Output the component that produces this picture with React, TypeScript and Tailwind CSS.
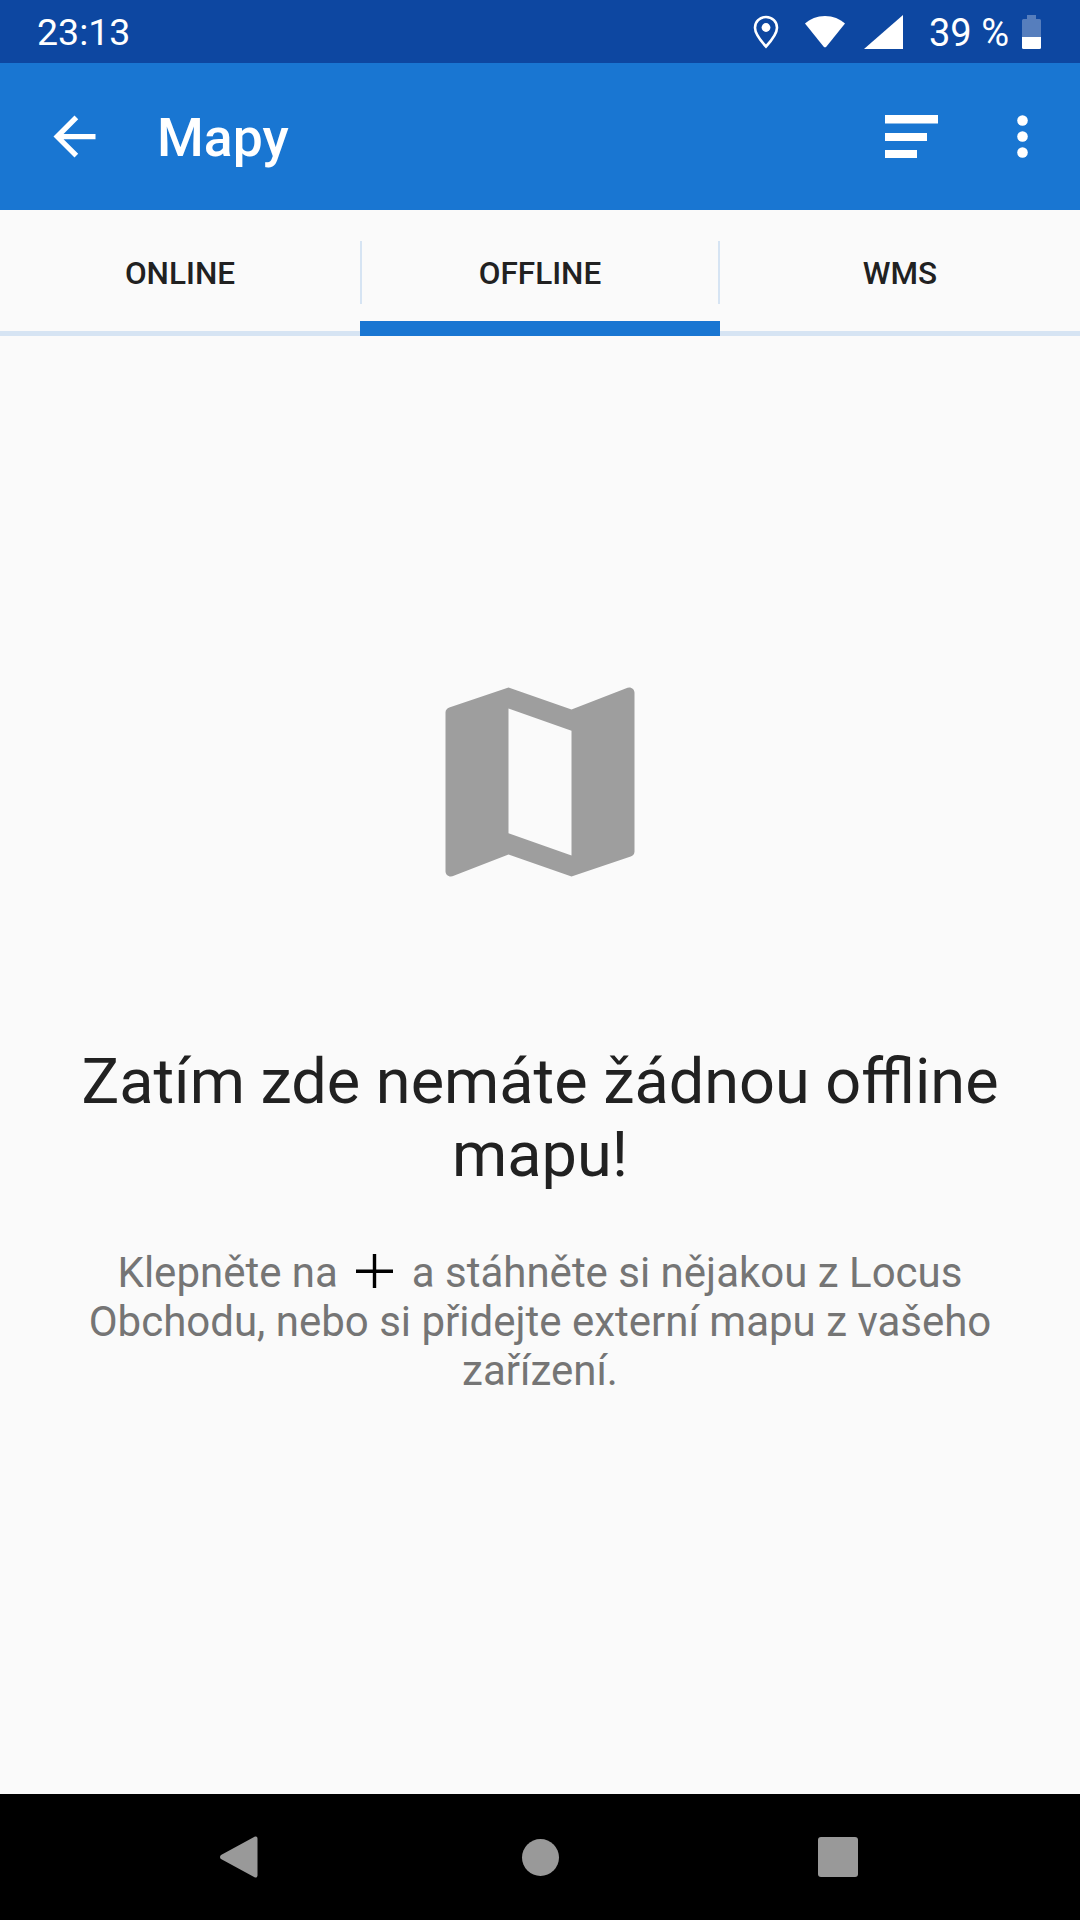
function StatusBar() {
  return (
    <div className="flex h-[63px] items-center justify-between bg-[#0d47a1] pl-[37px] pr-[39px] text-white">
      <span className="pt-[2px] text-[37.5px] leading-none">23:13</span>
      <div className="flex items-center">
        <svg width="26" height="34" viewBox="0 0 26 34" fill="none" className="mr-[26px]">
          <path d="M13 2C6.6 2 2 6.9 2 12.7c0 6.3 5.7 13 11 18.8 5.3-5.8 11-12.5 11-18.8C24 6.9 19.4 2 13 2z" stroke="white" strokeWidth="2.6" />
          <circle cx="13" cy="12.5" r="4.4" fill="white" />
        </svg>
        <svg width="40" height="32" viewBox="0 0 40 32" className="mr-[19px]">
          <path d="M0 7.5C5 3 12 0 20 0s15 3 20 7.5L21.5 30.5a2 2 0 0 1-3 0z" fill="white" />
        </svg>
        <svg width="39" height="34" viewBox="0 0 39 34" className="mr-[26px]">
          <path d="M39 0v34H0z" fill="white" />
        </svg>
        <span className="mr-[13px] pt-[2px] text-[38px] leading-none">39 %</span>
        <svg width="19" height="34" viewBox="0 0 19 34">
          <path d="M5 0h9v4h3.5a1.5 1.5 0 0 1 1.5 1.5V22H0V5.5A1.5 1.5 0 0 1 1.5 4H5z" fill="white" opacity="0.3" />
          <path d="M0 22h19v10.5a1.5 1.5 0 0 1-1.5 1.5h-16A1.5 1.5 0 0 1 0 32.5z" fill="white" />
        </svg>
      </div>
    </div>
  )
}

function AppBar() {
  return (
    <div className="flex h-[147px] items-center bg-[#1976d2] pl-[43px] pr-[52px] text-white">
      <svg width="63" height="63" viewBox="0 0 24 24" fill="white">
        <path d="M20 11H7.83l5.59-5.59L12 4l-8 8 8 8 1.41-1.41L7.83 13H20v-2z" />
      </svg>
      <span className="ml-[51px] flex-1 pt-[2px] text-[53.5px] font-medium leading-none">Mapy</span>
      <svg width="53" height="43" viewBox="0 0 53 43" fill="white" className="mr-[79px]">
        <rect x="0" y="0" width="53" height="8.5" />
        <rect x="0" y="18" width="42" height="8" />
        <rect x="0" y="35" width="32" height="8" />
      </svg>
      <svg width="11" height="43" viewBox="0 0 11 43" fill="white">
        <circle cx="5.5" cy="5.5" r="5.3" />
        <circle cx="5.5" cy="21.5" r="5.3" />
        <circle cx="5.5" cy="37.5" r="5.3" />
      </svg>
    </div>
  )
}

function Tabs() {
  return (
    <div className="flex">
      <div className="h-[126px] w-[360px] border-b-[5px] border-[#d6e4f3]">
        <div className="mt-[31px] flex h-[63px] items-center justify-center pt-[2px] text-[31.5px] font-medium text-[#212121]">ONLINE</div>
      </div>
      <div className="h-[126px] w-[360px] border-b-[15px] border-[#1976d2]">
        <div className="mt-[31px] flex h-[63px] items-center justify-center border-x-2 border-[#d6e4f3] pt-[2px] text-[31.5px] font-medium text-[#212121]">OFFLINE</div>
      </div>
      <div className="h-[126px] w-[360px] border-b-[5px] border-[#d6e4f3]">
        <div className="mt-[31px] flex h-[63px] items-center justify-center pt-[2px] text-[31.5px] font-medium text-[#212121]">WMS</div>
      </div>
    </div>
  )
}

function NavBar() {
  return (
    <div className="relative h-[126px] bg-black">
      <div className="flex h-full items-center pl-[220px]">
        <svg width="38" height="42" viewBox="0 0 38 42" fill="#999999">
          <path d="M35 .5a2 2 0 0 1 2.5 2v37a2 2 0 0 1-2.5 2L1 23a2.5 2.5 0 0 1 0-4z" />
        </svg>
        <div className="ml-[264px] h-[37px] w-[37px] rounded-full bg-[#999999]" />
        <div className="ml-[259px] h-[40px] w-[40px] rounded-[3px] bg-[#999999]" />
      </div>
    </div>
  )
}

export default function App() {
  return (
    <div className="flex h-[1920px] w-[1080px] flex-col overflow-hidden bg-[#fafafa] font-[Roboto,sans-serif]">
      <StatusBar />
      <AppBar />
      <Tabs />
      <main className="flex flex-1 flex-col items-center px-[60px] pt-[320px] text-center">
        <svg width="252" height="252" viewBox="0 0 24 24" fill="#9e9e9e">
          <path d="M20.5 3l-.16.03L15 5.1 9 3 3.36 4.9c-.21.07-.36.25-.36.48V20.5c0 .28.22.5.5.5l.16-.03L9 18.9l6 2.1 5.64-1.9c.21-.07.36-.25.36-.48V3.5c0-.28-.22-.5-.5-.5zM15 19l-6-2.11V5l6 2.11V19z" />
        </svg>
        <h1 className="mt-[137px] text-[63px] font-normal leading-[73px] text-[#212121]">Zatím zde nemáte žádnou offline mapu!</h1>
        <p className="mt-[57px] text-[42px] leading-[49px] text-[#757575]">
          Klepněte na{' '}
          <svg width="37" height="34" viewBox="0 0 37 34" className="mx-[8px] inline-block align-[-1px]">
            <path d="M0 15.5h37v3.4H0zM16.8 0h3.4v34h-3.4z" fill="black" />
          </svg>{' '}
          a stáhněte si nějakou z Locus Obchodu, nebo si přidejte externí mapu z vašeho zařízení.
        </p>
      </main>
      <NavBar />
    </div>
  )
}
